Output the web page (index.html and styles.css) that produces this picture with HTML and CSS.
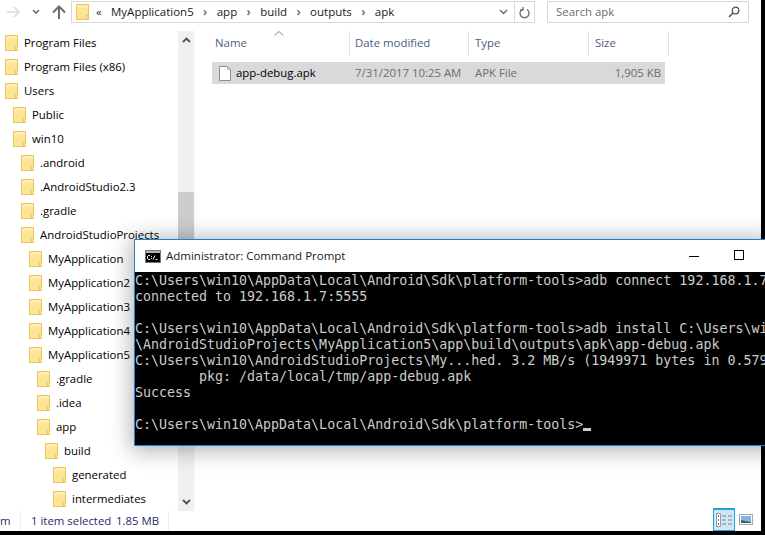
FILE: index.html
```html
<!DOCTYPE html>
<html lang="en">
<head>
<meta charset="utf-8">
<title>apk</title>
<link rel="stylesheet" href="styles.css">
</head>
<body>
<svg class="defs" width="0" height="0" aria-hidden="true">
  <symbol id="folder" viewBox="0 0 13 16">
    <path d="M.5.5h12v15H.5z" fill="#fde597" stroke="#ecc55a"/>
    <path d="M1 1h11v3H1z" fill="#fff0bd" opacity=".5"/>
    <path d="M10.5 15.5v-4h2" fill="none" stroke="#ecc55a"/>
  </symbol>
</svg>
<div class="explorer">
  <header class="toolbar">
    <div class="nav">
      <svg class="nav-back" width="14" height="12" viewBox="0 0 14 12"><path d="M1 6h12M8 1l5 5-5 5" fill="none" stroke="#dcdcdc" stroke-width="1.6"/></svg>
      <svg class="nav-down" width="8" height="6" viewBox="0 0 8 6"><path d="M1 1l3 3 3-3" fill="none" stroke="#6d6d6d" stroke-width="1.6"/></svg>
      <svg class="nav-up" width="14" height="14" viewBox="0 0 14 14"><path d="M7 14V2M1 7.500l6-6 6 6" fill="none" stroke="#6d6d6d" stroke-width="2"/></svg>
    </div>
    <div class="address">
      <svg class="address-folder" width="13" height="16"><use href="#folder"/></svg>
      <span class="crumb-back">&laquo;</span>
      <span class="crumb">MyApplication5</span><span class="sep">&rsaquo;</span>
      <span class="crumb">app</span><span class="sep">&rsaquo;</span>
      <span class="crumb">build</span><span class="sep">&rsaquo;</span>
      <span class="crumb">outputs</span><span class="sep">&rsaquo;</span>
      <span class="crumb">apk</span>
      <span class="address-tools">
        <svg class="addr-chevron" width="9" height="6" viewBox="0 0 9 6"><path d="M1 1l3.500 3.500L8 1" fill="none" stroke="#6d6d6d" stroke-width="1.500"/></svg>
        <span class="refresh">
          <svg width="11" height="13" viewBox="0 0 11 13"><path d="M3 3.500a4.500 4.500 0 1 0 5 0M4 1v3H1" fill="none" stroke="#6d6d6d" stroke-width="1.300"/></svg>
        </span>
      </span>
    </div>
    <div class="search">
      <span>Search apk</span>
      <svg width="12" height="12" viewBox="0 0 12 12"><circle cx="7.500" cy="4.500" r="3.300" fill="none" stroke="#555" stroke-width="1.300"/><path d="M5 7l-4 4" stroke="#555" stroke-width="1.600"/></svg>
    </div>
  </header>

  <main class="panes">
    <nav class="tree">
      <div class="node lv0"><svg width="13" height="16"><use href="#folder"/></svg>Program Files</div>
      <div class="node lv0"><svg width="13" height="16"><use href="#folder"/></svg>Program Files (x86)</div>
      <div class="node lv0"><svg width="13" height="16"><use href="#folder"/></svg>Users</div>
      <div class="node lv1"><svg width="13" height="16"><use href="#folder"/></svg>Public</div>
      <div class="node lv1"><svg width="13" height="16"><use href="#folder"/></svg>win10</div>
      <div class="node lv2"><svg width="13" height="16"><use href="#folder"/></svg>.android</div>
      <div class="node lv2"><svg width="13" height="16"><use href="#folder"/></svg>.AndroidStudio2.3</div>
      <div class="node lv2"><svg width="13" height="16"><use href="#folder"/></svg>.gradle</div>
      <div class="node lv2"><svg width="13" height="16"><use href="#folder"/></svg>AndroidStudioProjects</div>
      <div class="node lv3"><svg width="13" height="16"><use href="#folder"/></svg>MyApplication</div>
      <div class="node lv3"><svg width="13" height="16"><use href="#folder"/></svg>MyApplication2</div>
      <div class="node lv3"><svg width="13" height="16"><use href="#folder"/></svg>MyApplication3</div>
      <div class="node lv3"><svg width="13" height="16"><use href="#folder"/></svg>MyApplication4</div>
      <div class="node lv3"><svg width="13" height="16"><use href="#folder"/></svg>MyApplication5</div>
      <div class="node lv4"><svg width="13" height="16"><use href="#folder"/></svg>.gradle</div>
      <div class="node lv4"><svg width="13" height="16"><use href="#folder"/></svg>.idea</div>
      <div class="node lv4"><svg width="13" height="16"><use href="#folder"/></svg>app</div>
      <div class="node lv5"><svg width="13" height="16"><use href="#folder"/></svg>build</div>
      <div class="node lv6"><svg width="13" height="16"><use href="#folder"/></svg>generated</div>
      <div class="node lv6"><svg width="13" height="16"><use href="#folder"/></svg>intermediates</div>
    </nav>
    <div class="scrollbar">
      <svg class="scroll-arrow" width="9" height="6" viewBox="0 0 9 6"><path d="M1 5l3.500-3.500L8 5" fill="none" stroke="#505050" stroke-width="1.800"/></svg>
      <div class="thumb"></div>
      <svg class="scroll-arrow" width="9" height="6" viewBox="0 0 9 6"><path d="M1 1l3.500 3.500L8 1" fill="none" stroke="#505050" stroke-width="1.800"/></svg>
    </div>
    <section class="files">
      <div class="header-row">
        <svg class="sort" width="10" height="5" viewBox="0 0 10 5"><path d="M.5 4.500L5 .5l4.500 4" fill="none" stroke="#8a8a8a"/></svg>
        <div class="col col-name">Name</div>
        <div class="col col-date">Date modified</div>
        <div class="col col-type">Type</div>
        <div class="col col-size">Size</div>
      </div>
      <div class="file-row">
        <div class="cell-name">
          <svg width="12" height="15" viewBox="0 0 12 15"><path d="M.5.500h8l3 3v11H.5z" fill="#fff" stroke="#8f8f8f"/><path d="M8.500.500v3h3" fill="none" stroke="#b5b5b5"/></svg>
          app-debug.apk
        </div>
        <div class="cell-date">7/31/2017 10:25 AM</div>
        <div class="cell-type">APK File</div>
        <div class="cell-size">1,905 KB</div>
      </div>
    </section>
  </main>

  <footer class="status">
    <span class="status-count">m</span>
    <span class="status-selected">1 item selected</span>
    <span class="status-size">1.85 MB</span>
    <div class="views">
      <span class="view view-active">
        <svg width="16" height="14" viewBox="0 0 16 14"><path d="M.5.500h4v13h-4z" fill="#fff" stroke="#9a9a9a"/><path d="M2 3h1M2 7h1M2 11h1" stroke="#555" stroke-width="1.500"/><path d="M6 3h4M12 3h4M6 7h4M12 7h4M6 11h4M12 11h4" stroke="#808080"/></svg>
      </span>
      <span class="view">
        <svg width="14" height="11" viewBox="0 0 14 11"><rect x=".5" y=".5" width="13" height="10" fill="#fff" stroke="#a8a8a8"/><rect x="2" y="2" width="10" height="7" fill="#7fb6ea"/><path d="M2 9V6l4 1 6 1v1z" fill="#3f5f57"/></svg>
      </span>
    </div>
  </footer>
</div>

<aside class="cmd">
  <div class="cmd-title">
    <svg class="cmd-icon" width="16" height="13" viewBox="0 0 16 13"><rect width="16" height="13" fill="#000"/><rect x=".5" y=".5" width="15" height="12" fill="none" stroke="#777"/><rect x="1" y="1" width="14" height="2" fill="#b5b5b5"/><path d="M3 5.500h2M2.500 6v3M3 9.500h2M6.500 6v1M6.500 8v1M8 9.500l2-4M10.500 9.500h2" stroke="#e5e5e5"/></svg>
    <span class="cmd-name">Administrator: Command Prompt</span>
    <span class="cmd-min"></span>
    <span class="cmd-max"></span>
  </div>
  <pre class="cmd-body">C:\Users\win10\AppData\Local\Android\Sdk\platform-tools&gt;adb connect 192.168.1.7:5555
connected to 192.168.1.7:5555

C:\Users\win10\AppData\Local\Android\Sdk\platform-tools&gt;adb install C:\Users\win10\
\AndroidStudioProjects\MyApplication5\app\build\outputs\apk\app-debug.apk
C:\Users\win10\AndroidStudioProjects\My...hed. 3.2 MB/s (1949971 bytes in 0.579s)
        pkg: /data/local/tmp/app-debug.apk
Success

C:\Users\win10\AppData\Local\Android\Sdk\platform-tools&gt;<span class="caret"></span></pre>
</aside>
</body>
</html>
```

FILE: styles.css
```css
* { box-sizing: border-box; }

html, body {
  margin: 0;
  height: 100%;
  overflow: hidden;
  background: #000;
}

body {
  position: relative;
  font-family: "Open Sans", "Noto Sans", sans-serif;
  font-size: 11.4px;
  line-height: 16px;
  color: #000;
}

svg { display: block; flex: none; }
.defs { position: absolute; }

.explorer {
  width: 761px;
  height: 531px;
  background: #fff;
  display: flex;
  flex-direction: column;
}

/* toolbar */
.toolbar {
  height: 31px;
  flex: none;
  display: flex;
  align-items: flex-start;
  padding-top: 1px;
}

.nav {
  width: 71px;
  height: 22px;
  flex: none;
  display: flex;
  align-items: center;
}
.nav-back { margin-left: 6px; }
.nav-down { margin-left: 12px; }
.nav-up { margin-left: 12px; }

.address {
  width: 464px;
  height: 22px;
  border: 1px solid #d9d9d9;
  display: flex;
  align-items: center;
  padding-left: 4px;
  flex: none;
  color: #1a1a1a;
  font-size: 11.5px;
}
.address-folder { margin-right: 7px; }
.crumb-back { width: 15px; color: #333; }
.sep { color: #777; width: 23px; text-align: center; font-weight: 700; }

.address-tools {
  margin-left: auto;
  display: flex;
  align-items: center;
  height: 100%;
}
.addr-chevron { margin-right: 6px; }
.refresh {
  width: 20px;
  height: 100%;
  border-left: 1px solid #d9d9d9;
  display: flex;
  align-items: center;
  justify-content: center;
}

.search {
  width: 202px;
  height: 22px;
  margin-left: 12px;
  border: 1px solid #d9d9d9;
  display: flex;
  align-items: center;
  justify-content: space-between;
  padding: 0 8px;
  color: #6d6d6d;
  flex: none;
}

/* panes */
.panes {
  flex: 1;
  display: flex;
  min-height: 0;
}

.tree {
  width: 178px;
  flex: none;
  overflow: hidden;
}

.node {
  height: 24px;
  display: flex;
  align-items: center;
  gap: 6px;
  white-space: nowrap;
}
.lv0 { padding-left: 5px; }
.lv1 { padding-left: 13px; }
.lv2 { padding-left: 21px; }
.lv3 { padding-left: 29px; }
.lv4 { padding-left: 37px; }
.lv5 { padding-left: 45px; }
.lv6 { padding-left: 53px; }

.scrollbar {
  width: 16px;
  flex: none;
  background: #f0f0f0;
  display: flex;
  flex-direction: column;
  align-items: center;
  padding: 6px 0;
  margin-right: 18px;
  box-shadow: 1px 0 0 #f7f7f7;
}
.thumb {
  width: 100%;
  height: 100px;
  background: #cdcdcd;
  margin-top: 149px;
  margin-bottom: auto;
}

.files {
  flex: 1;
  min-width: 0;
}

.header-row {
  position: relative;
  height: 31px;
  display: flex;
  color: #4c607a;
}
.sort { position: absolute; left: 62px; top: 0; }
.col {
  height: 25px;
  display: flex;
  align-items: center;
  padding-left: 6px;
  padding-bottom: 1px;
  border-right: 1px solid #e5e5e5;
  flex: none;
}
.col-name { width: 138px; padding-left: 3px; }
.col-date { width: 119px; padding-left: 5px; }
.col-type { width: 120px; }
.col-size { width: 80px; }

.file-row {
  width: 453px;
  height: 22px;
  background: #d9d9d9;
  display: flex;
  align-items: center;
  color: #6d6d6d;
}
.cell-name {
  width: 138px;
  display: flex;
  align-items: center;
  gap: 5px;
  padding-left: 7px;
  color: #000;
  flex: none;
}
.cell-date { width: 119px; padding-left: 5px; flex: none; white-space: nowrap; }
.cell-type { width: 90px; padding-left: 6px; flex: none; }
.cell-size { flex: 1; text-align: right; padding-right: 4px; }

/* status */
.status {
  height: 20px;
  flex: none;
  display: flex;
  align-items: center;
  color: #2a2a6a;
  position: relative;
}
.status-count {
  width: 21px;
  height: 100%;
  border-right: 1px solid #ededed;
  flex: none;
  display: flex;
  align-items: center;
}
.status-selected { margin-left: 10px; width: 85px; flex: none; white-space: nowrap; }
.status-size {
  width: 53px;
  height: 100%;
  border-right: 1px solid #ededed;
  display: flex;
  align-items: center;
  flex: none;
}

.views {
  margin-left: auto;
  margin-right: 8px;
  display: flex;
  align-items: flex-end;
  height: 100%;
}
.view {
  width: 22px;
  height: 23px;
  display: flex;
  align-items: center;
  justify-content: center;
  margin-top: -3px;
}
.view + .view { margin-left: 3px; width: 15px; }
.view-active {
  background: #cce8f7;
  border: 1px solid #26a0da;
  border-width: 2px 1px 1px;
  position: relative;
  z-index: 1;
}

/* floating command window */
.cmd {
  position: absolute;
  left: 134px;
  top: 239px;
  width: 640px;
  height: 207px;
  background: #000;
  border: 1px solid #1883d7;
  box-shadow: 0 2px 20px 3px rgba(0, 0, 0, .3);
  display: flex;
  flex-direction: column;
  overflow: hidden;
}
.cmd-title {
  height: 32px;
  flex: none;
  background: #fff;
  display: flex;
  align-items: center;
  color: #1a1a1a;
  font-size: 11.5px;
  position: relative;
}
.cmd-icon { margin-left: 10px; margin-right: 5px; }
.cmd-min {
  position: absolute;
  left: 554px;
  top: 16px;
  width: 10px;
  height: 1px;
  background: #000;
}
.cmd-max {
  position: absolute;
  left: 599px;
  top: 10px;
  width: 10px;
  height: 10px;
  border: 1px solid #000;
}
.cmd-body {
  margin: 0;
  flex: 1;
  padding: 1px 0 0;
  background: #000;
  color: #ccc;
  font-family: "DejaVu Sans Mono", "Liberation Mono", monospace;
  font-size: 13.3px;
  line-height: 16px;
  white-space: pre;
  overflow: hidden;
}
.caret {
  display: inline-block;
  width: 8px;
  height: 3px;
  background: #ccc;
  vertical-align: -2px;
}
```
